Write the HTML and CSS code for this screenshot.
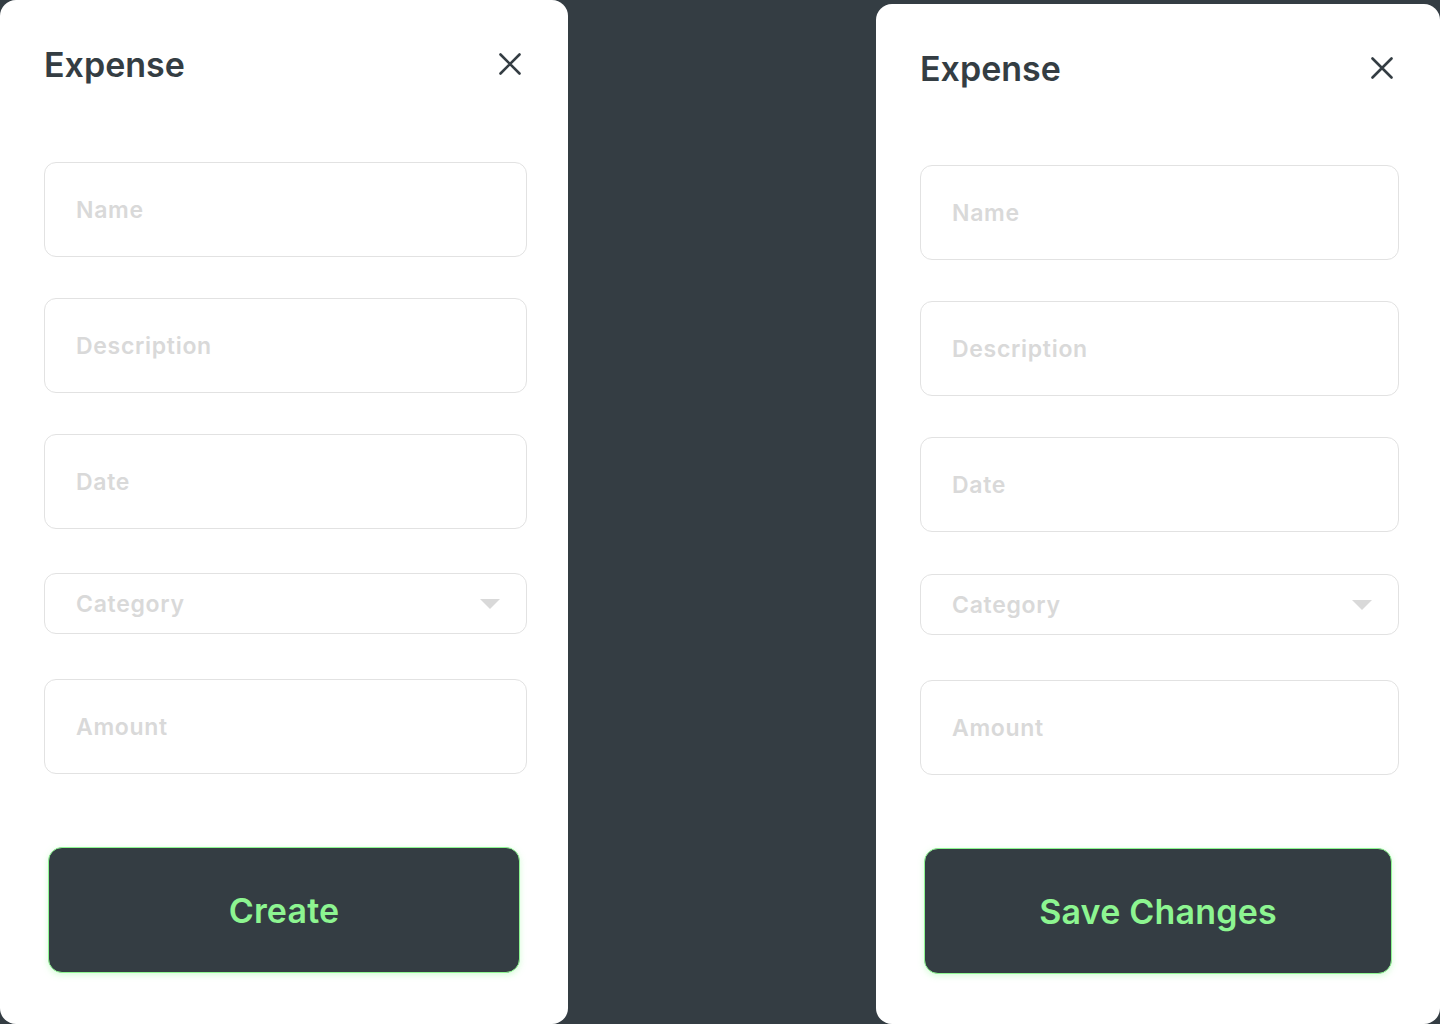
FILE: index.html
```html
<!DOCTYPE html>
<html lang="en">
<head>
<meta charset="utf-8">
<title>Expense</title>
<link rel="stylesheet" href="styles.css">
</head>
<body>
<main class="stage">
  <section class="panel panel-left">
    <header class="panel-head">
      <h1 class="title">Expense</h1>
      <button class="close" aria-label="Close">
        <svg width="22" height="22" viewBox="0 0 22 22"><path d="M1.5 1.5 L20.5 20.5 M20.5 1.5 L1.5 20.5" stroke="#343d43" stroke-width="2.6" stroke-linecap="round" fill="none"/></svg>
      </button>
    </header>
    <form class="fields">
      <input class="field" type="text" placeholder="Name">
      <input class="field" type="text" placeholder="Description">
      <input class="field" type="text" placeholder="Date">
      <div class="field select"><span>Category</span><svg class="caret" width="20" height="10" viewBox="0 0 20 10"><path d="M0 0 H20 L10 10 Z" fill="#d9d9d9"/></svg></div>
      <input class="field" type="text" placeholder="Amount">
    </form>
    <button class="primary">Create</button>
  </section>

  <section class="panel panel-right">
    <header class="panel-head">
      <h1 class="title">Expense</h1>
      <button class="close" aria-label="Close">
        <svg width="22" height="22" viewBox="0 0 22 22"><path d="M1.5 1.5 L20.5 20.5 M20.5 1.5 L1.5 20.5" stroke="#343d43" stroke-width="2.6" stroke-linecap="round" fill="none"/></svg>
      </button>
    </header>
    <form class="fields">
      <input class="field" type="text" placeholder="Name">
      <input class="field" type="text" placeholder="Description">
      <input class="field" type="text" placeholder="Date">
      <div class="field select"><span>Category</span><svg class="caret" width="20" height="10" viewBox="0 0 20 10"><path d="M0 0 H20 L10 10 Z" fill="#d9d9d9"/></svg></div>
      <input class="field" type="text" placeholder="Amount">
    </form>
    <button class="primary">Save Changes</button>
  </section>
</main>
</body>
</html>
```

FILE: styles.css
```css
* { box-sizing: border-box; }
html, body { margin: 0; padding: 0; }
body {
  background: #343d43;
  font-family: Inter, "Noto Sans", sans-serif;
  width: 1440px;
  height: 1024px;
  overflow: hidden;
}
.stage {
  display: flex;
  justify-content: space-between;
  align-items: flex-start;
  height: 1024px;
}
.panel {
  background: #ffffff;
  border-radius: 16px;
  display: flex;
  flex-direction: column;
  padding: 40px 41px 0 44px;
}
.panel-left {
  width: 568px;
  height: 1024px;
}
.panel-right {
  width: 564px;
  height: 1020px;
  margin-top: 4px;
}
.panel-head {
  display: flex;
  align-items: center;
  justify-content: space-between;
  height: 48px;
  flex-shrink: 0;
}
.title {
  margin: 0;
  font-size: 34px;
  font-weight: 600;
  color: #343d43;
  letter-spacing: 0;
}
.close {
  background: none;
  border: 0;
  padding: 0;
  margin-right: 6px;
  width: 22px;
  height: 22px;
  display: flex;
}
.fields {
  display: flex;
  flex-direction: column;
  gap: 41px;
  margin: 74px 0 0;
  flex-shrink: 0;
}
.panel-right .fields { margin-top: 73px; }
.field {
  width: 100%;
  height: 95px;
  flex-shrink: 0;
  border: 1px solid #e2e2e2;
  border-radius: 12px;
  padding: 0 31px;
  font-family: inherit;
  font-size: 23px;
  font-weight: 600;
  letter-spacing: 0.7px;
  color: #343d43;
  background: #fff;
  outline: none;
}
.field::placeholder { color: #d9d9d9; }
.select {
  height: 61px;
  margin: 3px 0 4px;
  display: flex;
  align-items: center;
  justify-content: space-between;
  color: #d9d9d9;
  padding-right: 26px;
}
.panel-right .select { margin-top: 1px; }
.primary {
  flex-shrink: 0;
  margin: 73px 7px 0 4px;
  height: 126px;
  background: #343d43;
  border: 1px solid #8df591;
  border-radius: 14px;
  box-shadow: 0 2px 6px rgba(141, 245, 145, 0.35);
  color: #8df591;
  font-family: inherit;
  font-size: 34px;
  font-weight: 600;
  letter-spacing: 0.2px;
}
```
